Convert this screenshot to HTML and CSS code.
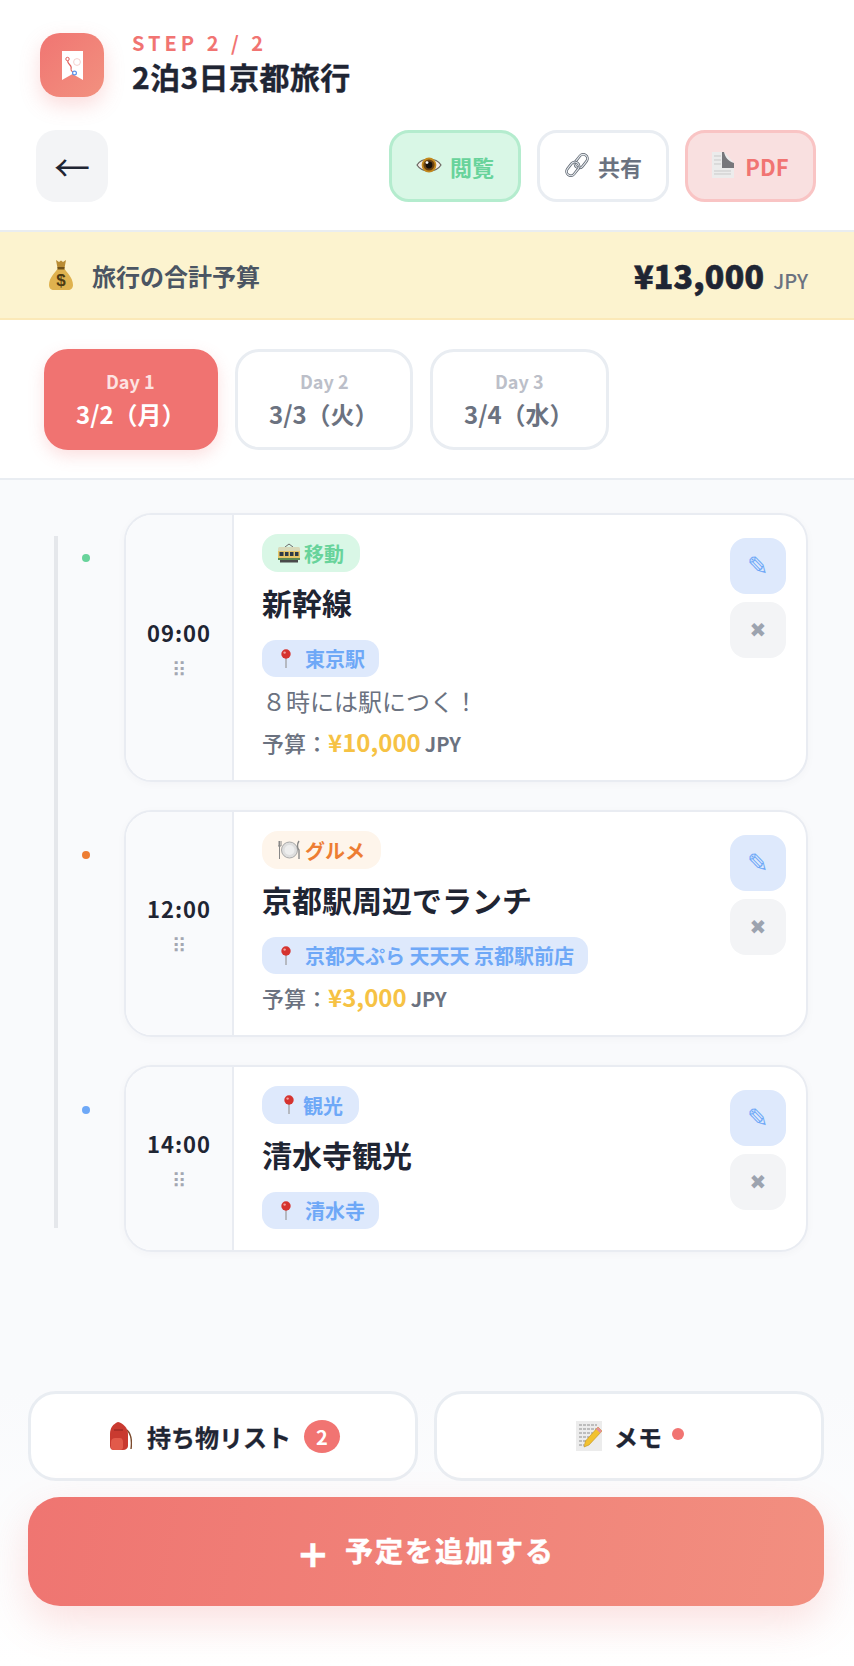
FILE: index.html
```html
<!DOCTYPE html>
<html lang="ja">
  <head>
    <meta charset="utf-8" />
    <title>2泊3日京都旅行</title>
    <link rel="stylesheet" href="styles.css">
  </head>
  <body>
    <!-- icon sprite, the emoji are drawn here because no emoji font is installed -->
    <svg class="sprite" aria-hidden="true">
      <symbol id="i-eye" viewBox="0 0 26 20">
        <path d="M1 10C6 2 20 2 25 10C20 18 6 18 1 10Z" fill="#f3efe9" stroke="#6b6560" stroke-width="1.2"/>
        <circle cx="13" cy="10" r="7.4" fill="#c58a1e"/>
        <circle cx="13" cy="10" r="5.6" fill="#6d4313"/>
        <circle cx="13" cy="10" r="3.4" fill="#17110c"/>
        <circle cx="11" cy="7.6" r="1.4" fill="#fff"/>
      </symbol>
      <symbol id="i-link" viewBox="0 0 26 26">
        <rect x="13" y="1.5" width="8.5" height="15" rx="4.2" transform="rotate(38 17 9)" fill="none" stroke="#59616b" stroke-width="2.6"/>
        <rect x="13" y="1.5" width="8.5" height="15" rx="4.2" transform="rotate(38 17 9)" fill="none" stroke="#e3e7ec" stroke-width="1.2"/>
        <rect x="4.5" y="9.5" width="8.5" height="15" rx="4.2" transform="rotate(38 9 17)" fill="none" stroke="#59616b" stroke-width="2.6"/>
        <rect x="4.5" y="9.5" width="8.5" height="15" rx="4.2" transform="rotate(38 9 17)" fill="none" stroke="#e3e7ec" stroke-width="1.2"/>
      </symbol>
      <symbol id="i-doc" viewBox="0 0 22 26">
        <path d="M0 0H12L22 11V26H0Z" fill="#ececec"/>
        <path d="M12 0C13 5 16 9 22 11V16H10V0Z" fill="#77777b"/>
        <path d="M2 4H9M2 8H9M2 12H9M2 19H19M2 22H19" stroke="#c9c9c9" stroke-width="1"/>
      </symbol>
      <symbol id="i-money" viewBox="0 0 24 30">
        <path d="M7 0L10 2L12 .5L14 2L17 0L15.500 8H8.500Z" fill="#b98c35"/>
        <path d="M9 8H15C17 12 24 17 24 25C24 28 22 30 19 30H5C2 30 0 28 0 25C0 17 7 12 9 8Z" fill="#dfb24f"/>
        <rect x="8.500" y="7" width="7" height="2.500" fill="#6f5019"/>
        <text x="12" y="26" class="dollar">$</text>
      </symbol>
      <symbol id="i-tram" viewBox="0 0 22 20">
        <path d="M7 4L11 1M15 4L11 1" stroke="#6b6b6b" stroke-width="1"/>
        <rect x="0" y="4" width="22" height="5" rx="1.5" fill="#d8d9b9"/>
        <rect x="0" y="8" width="22" height="9" fill="#e7c667"/>
        <rect x="1.5" y="9" width="4" height="4" fill="#2e3b48"/>
        <rect x="7" y="9" width="3.5" height="4" fill="#2e3b48"/>
        <rect x="12" y="9" width="3.5" height="4" fill="#2e3b48"/>
        <rect x="17" y="9" width="3.5" height="4" fill="#2e3b48"/>
        <rect x="0" y="15" width="22" height="2" fill="#5e8a54"/>
        <rect x="2" y="17" width="18" height="2.5" fill="#4a4a4a"/>
      </symbol>
      <symbol id="i-pin" viewBox="0 0 12 20">
        <rect x="5.4" y="9" width="1.2" height="10" fill="#9a9a9a"/>
        <circle cx="6" cy="5" r="4.7" fill="#d5332f"/>
        <circle cx="4.6" cy="3.6" r="1.2" fill="#f2a09c"/>
      </symbol>
      <symbol id="i-plate" viewBox="0 0 23 20">
        <circle cx="11.5" cy="10" r="8" fill="#dedede" stroke="#a9a9a9" stroke-width="1"/>
        <circle cx="11.5" cy="10" r="5" fill="#eeeeee"/>
        <path d="M1.5 1V19M0 1V6H3V1" fill="none" stroke="#888" stroke-width="1"/>
        <path d="M21 1C19 4 19 8 21 10V19" fill="none" stroke="#888" stroke-width="1.4"/>
      </symbol>
      <symbol id="i-bag" viewBox="0 0 24 28">
        <path d="M19 8C23 12 24 20 23 27" fill="none" stroke="#7b4a2c" stroke-width="1.4"/>
        <path d="M10 0C5 2 2 6 2 12V24C2 27 4 28 6 28H15C18 28 20 26 20 24V12C20 6 15 1 10 0Z" fill="#c93a30"/>
        <path d="M3 20C3 17 5 16 7 16H12C14 16 15 18 15 20V25C15 27 14 28 12 28H6C4 28 3 27 3 25Z" fill="#e25a4a"/>
        <path d="M6 8H15" stroke="#8e231e" stroke-width="1"/>
      </symbol>
      <symbol id="i-memo" viewBox="0 0 26 30">
        <rect x="0" y="0" width="26" height="30" fill="#ececec"/>
        <path d="M3 4H21M3 8H21M3 12H17M3 16H13M3 20H10M3 24H8" stroke="#8e8e8e" stroke-width="1" stroke-dasharray="3 1"/>
        <path d="M22 6L26 10L13 24L8 26L9.500 20Z" fill="#f2c230" stroke="#c08f1e" stroke-width=".6"/>
        <path d="M22 6L26 10L24 12L20 8Z" fill="#e58f9c"/>
      </symbol>
      <symbol id="i-route" viewBox="0 0 21 29">
        <path d="M0 0H21V29L10.500 23L0 29Z" fill="#fff"/>
        <path d="M6 9C4 13 11 14 9 18C8.500 20 11 21 12 22" fill="none" stroke="#e0605c" stroke-width="1.100"/>
        <circle cx="5.500" cy="8" r="1.700" fill="#fff" stroke="#e0605c"/>
        <circle cx="12.500" cy="22" r="1.900" fill="#fff" stroke="#5b93ec" stroke-width="1.200"/>
        <circle cx="15" cy="11" r="3.400" fill="none" stroke="#f2c4c0" stroke-width=".8"/>
      </symbol>
    </svg>

    <header class="header">
      <div class="brand">
        <div class="logo"><svg class="logo-icon"><use href="#i-route"/></svg></div>
        <div class="brand-text">
          <div class="step">STEP 2 / 2</div>
          <h1 class="trip-title">2泊3日京都旅行</h1>
        </div>
      </div>
      <div class="toolbar">
        <button type="button" class="backButton">←</button>
        <div class="toolbar-right">
          <button type="button" class="toolButton viewButton"><svg class="ic-eye"><use href="#i-eye"/></svg>閲覧</button>
          <button type="button" class="toolButton shareButton"><svg class="ic-link"><use href="#i-link"/></svg>共有</button>
          <button type="button" class="toolButton pdfButton"><svg class="ic-doc"><use href="#i-doc"/></svg>PDF</button>
        </div>
      </div>
    </header>

    <section class="budget">
      <div class="budget-label"><svg class="ic-money"><use href="#i-money"/></svg>旅行の合計予算</div>
      <div class="budget-total"><span class="budget-amount">¥13,000</span><span class="budget-unit">JPY</span></div>
    </section>

    <nav class="days">
      <button type="button" class="dayTab active"><span class="day-no">Day 1</span><span class="day-date">3/2（月）</span></button>
      <button type="button" class="dayTab"><span class="day-no">Day 2</span><span class="day-date">3/3（火）</span></button>
      <button type="button" class="dayTab wide"><span class="day-no">Day 3</span><span class="day-date">3/4（水）</span></button>
    </nav>

    <main class="main">
      <div class="timeline">
        <div class="row">
          <span class="dot green"></span>
          <article class="card">
            <div class="time-col"><span class="time">09:00</span><span class="grip">⠿</span></div>
            <div class="card-body">
              <span class="tag tag-move"><svg class="ic-tram"><use href="#i-tram"/></svg>移動</span>
              <h2 class="card-title">新幹線</h2>
              <span class="place"><svg class="ic-pin"><use href="#i-pin"/></svg>東京駅</span>
              <p class="note">８時には駅につく！</p>
              <p class="cost">予算：<span class="cost-num">¥10,000</span><span class="cost-unit">JPY</span></p>
            </div>
            <div class="actions">
              <button type="button" class="editButton">✎</button>
              <button type="button" class="deleteButton">✖</button>
            </div>
          </article>
        </div>

        <div class="row">
          <span class="dot orange"></span>
          <article class="card">
            <div class="time-col"><span class="time">12:00</span><span class="grip">⠿</span></div>
            <div class="card-body">
              <span class="tag tag-food"><svg class="ic-plate"><use href="#i-plate"/></svg>グルメ</span>
              <h2 class="card-title">京都駅周辺でランチ</h2>
              <span class="place"><svg class="ic-pin"><use href="#i-pin"/></svg>京都天ぷら 天天天 京都駅前店</span>
              <p class="cost">予算：<span class="cost-num">¥3,000</span><span class="cost-unit">JPY</span></p>
            </div>
            <div class="actions">
              <button type="button" class="editButton">✎</button>
              <button type="button" class="deleteButton">✖</button>
            </div>
          </article>
        </div>

        <div class="row">
          <span class="dot blue"></span>
          <article class="card">
            <div class="time-col"><span class="time">14:00</span><span class="grip">⠿</span></div>
            <div class="card-body">
              <span class="tag tag-sight"><svg class="ic-pin"><use href="#i-pin"/></svg>観光</span>
              <h2 class="card-title">清水寺観光</h2>
              <span class="place"><svg class="ic-pin"><use href="#i-pin"/></svg>清水寺</span>
            </div>
            <div class="actions">
              <button type="button" class="editButton">✎</button>
              <button type="button" class="deleteButton">✖</button>
            </div>
          </article>
        </div>
      </div>
    </main>

    <footer class="footer">
      <div class="footer-tools">
        <button type="button" class="footButton"><svg class="ic-bag"><use href="#i-bag"/></svg>持ち物リスト<span class="count">2</span></button>
        <button type="button" class="footButton"><svg class="ic-memo"><use href="#i-memo"/></svg>メモ<span class="memo-dot"></span></button>
      </div>
      <button type="button" class="addButton"><span class="plus">+</span>予定を追加する</button>
    </footer>
  </body>
</html>
```

FILE: styles.css
```css
* {
  box-sizing: border-box;
}

body {
  margin: 0;
  width: 854px;
  height: 1666px;
  display: flex;
  flex-direction: column;
  background-color: #f9fafc;
  color: #1f2533;
  font-family: "Noto Sans CJK JP", "Noto Sans", sans-serif;
}

button {
  font-family: inherit;
  cursor: pointer;
}

svg {
  flex: none;
  display: block;
}

.sprite {
  display: none;
}

.dollar {
  font-family: "Liberation Sans", sans-serif;
  font-size: 17px;
  font-weight: bold;
  fill: #4d3a12;
  text-anchor: middle;
}

/* header */
.header {
  height: 232px;
  padding: 33px 38px 0 36px;
  background-color: white;
  border-bottom: 2px solid #e9edf0;
}

.brand {
  display: flex;
  align-items: center;
  gap: 28px;
  height: 64px;
  padding-left: 4px;
}

.logo {
  width: 64px;
  height: 64px;
  display: flex;
  align-items: center;
  justify-content: center;
  border-radius: 20px;
  background: linear-gradient(135deg, #f07572, #f2917f);
  box-shadow: 0 8px 20px rgba(240, 117, 114, 0.25);
}

.logo-icon {
  width: 21px;
  height: 29px;
}

.brand-text {
  margin-top: -3px;
}

.step {
  color: #f17472;
  font-size: 20px;
  font-weight: bold;
  letter-spacing: 4px;
  line-height: 24px;
}

.trip-title {
  margin: 1px 0 0;
  font-size: 30px;
  font-weight: bold;
  letter-spacing: 0.4px;
  line-height: 40px;
  -webkit-text-stroke: 0.4px #1f2533;
}

.toolbar {
  display: flex;
  justify-content: space-between;
  margin-top: 33px;
}

.toolbar-right {
  display: flex;
  gap: 16px;
}

.backButton {
  width: 72px;
  height: 72px;
  padding: 0;
  border: none;
  border-radius: 20px;
  background-color: #f3f4f6;
  color: #1f2533;
  font-size: 36px;
  line-height: 72px;
}

.toolButton {
  width: 132px;
  height: 72px;
  display: flex;
  align-items: center;
  justify-content: center;
  gap: 8px;
  padding: 0;
  border: 3px solid;
  border-radius: 20px;
  font-size: 22px;
  font-weight: bold;
}

.viewButton {
  background-color: #d9f7e6;
  border-color: #b4ecce;
  color: #68d39b;
}

.shareButton {
  background-color: white;
  border-color: #e9edf2;
  color: #6b7280;
}

.pdfButton {
  width: 131px;
  background-color: #f9e0e0;
  border-color: #f9c4c4;
  color: #f17472;
}

.ic-eye {
  width: 26px;
  height: 20px;
  margin-top: -3px;
}

.ic-link {
  width: 26px;
  height: 26px;
  margin-top: -2px;
}

.ic-doc {
  width: 22px;
  height: 26px;
  margin-top: -2px;
  margin-right: 3px;
}

/* budget bar */
.budget {
  height: 88px;
  display: flex;
  align-items: center;
  justify-content: space-between;
  padding: 0 46px 0 49px;
  background-color: #fcf3cf;
  border-bottom: 2px solid #fbe9b8;
}

.budget-label {
  display: flex;
  align-items: center;
  gap: 19px;
  color: #4b5563;
  font-size: 24px;
  font-weight: bold;
}

.ic-money {
  width: 24px;
  height: 30px;
}

.budget-total {
  display: flex;
  align-items: baseline;
  gap: 9px;
}

.budget-amount {
  font-size: 32px;
  font-weight: 900;
  letter-spacing: 0.3px;
  line-height: 44px;
  -webkit-text-stroke: 0.7px #1f2533;
}

.budget-unit {
  color: #6b7280;
  font-size: 20px;
  font-weight: 500;
}

/* day tabs */
.days {
  height: 160px;
  display: flex;
  gap: 17px;
  padding: 29px 0 0 44px;
  background-color: white;
  border-bottom: 2px solid #e9edf2;
  align-items: flex-start;
}

.dayTab {
  width: 178px;
  height: 101px;
  display: flex;
  flex-direction: column;
  padding: 17px 0 0 31px;
  border: 3px solid #e9edf2;
  border-radius: 24px;
  background-color: white;
  color: #6b7280;
  text-align: left;
}

.dayTab.wide {
  width: 179px;
}

.dayTab.active {
  width: 174px;
  padding-left: 29px;
  background-color: #f07371;
  border-color: #f07371;
  color: white;
  box-shadow: 0 6px 16px rgba(241, 116, 114, 0.22);
}

.day-no {
  margin-left: 31px;
  color: #bcbfc9;
  font-size: 18px;
  font-weight: bold;
  line-height: 24px;
}

.dayTab.active .day-no {
  margin-left: 30px;
  color: #fde3e2;
}

.day-date {
  margin-top: 4px;
  font-size: 24px;
  font-weight: bold;
  line-height: 34px;
  white-space: nowrap;
}

/* timeline */
.main {
  flex: 1;
  padding-top: 33px;
}

.timeline {
  position: relative;
  display: flex;
  flex-direction: column;
  gap: 28px;
  padding: 0 46px 0 82px;
}

.timeline::before {
  content: "";
  position: absolute;
  left: 54px;
  top: 23px;
  bottom: 24px;
  width: 4px;
  background-color: #e5e7eb;
}

.row {
  display: flex;
  gap: 34px;
  align-items: flex-start;
}

.dot {
  flex: none;
  width: 8px;
  height: 8px;
  margin-top: 41px;
  border-radius: 50%;
}

.green {
  background-color: #68d39b;
}

.orange {
  background-color: #ed7d33;
}

.blue {
  background-color: #6ea8f7;
}

.card {
  flex: 1;
  display: flex;
  overflow: hidden;
  border: 2px solid #e9ecf2;
  border-radius: 28px;
  background-color: white;
  box-shadow: 0 2px 8px rgba(31, 37, 51, 0.03);
}

.time-col {
  flex: none;
  width: 108px;
  display: flex;
  flex-direction: column;
  align-items: center;
  justify-content: center;
  background-color: #f9fafc;
  border-right: 2px solid #e9ecf2;
}

.time {
  font-size: 22px;
  font-weight: bold;
  letter-spacing: 1px;
  line-height: 36px;
}

.grip {
  margin-top: 8px;
  color: #a3a7b2;
  font-family: "DejaVu Sans", sans-serif;
  font-size: 20px;
  line-height: 24px;
}

.card-body {
  flex: 1;
  min-width: 0;
  display: flex;
  flex-direction: column;
  align-items: flex-start;
  padding: 19px 0 12px 28px;
}

.tag {
  height: 38px;
  display: flex;
  align-items: center;
  gap: 4px;
  padding: 0 16px;
  border-radius: 16px;
  font-size: 20px;
  font-weight: bold;
}

.tag-move {
  background-color: #d9f7e6;
  color: #68d39b;
}

.tag-food {
  background-color: #fef5eb;
  color: #ed7d33;
}

.tag-sight {
  background-color: #dee9fc;
  color: #6ea8f7;
  padding-left: 17px;
}

.ic-tram {
  width: 22px;
  height: 20px;
}

.ic-plate {
  width: 23px;
  height: 20px;
}

.ic-pin {
  width: 12px;
  height: 20px;
}

.tag-sight .ic-pin {
  margin: 0 4px;
}

.card-title {
  margin: 5px 0 13px;
  font-size: 30px;
  font-weight: bold;
  line-height: 50px;
}

.place {
  height: 37px;
  display: flex;
  align-items: center;
  gap: 13px;
  margin-bottom: 3px;
  padding: 0 14px 0 18px;
  border-radius: 14px;
  background-color: #dee9fc;
  color: #6ea8f7;
  font-size: 20px;
  font-weight: bold;
  white-space: nowrap;
}

.place:last-child {
  margin-bottom: 9px;
}

.note {
  margin: 1px 0 2px;
  color: #6b7280;
  font-size: 24px;
  line-height: 39px;
}

.cost {
  height: 46px;
  margin: 0;
  display: flex;
  align-items: baseline;
  color: #6b7280;
  font-size: 22px;
  font-weight: 500;
  line-height: 40px;
}

.cost-num {
  color: #f6c244;
  font-size: 24px;
  font-weight: bold;
}

.cost-unit {
  margin-left: 4px;
  font-size: 20px;
  font-weight: bold;
}

.actions {
  flex: none;
  display: flex;
  flex-direction: column;
  gap: 8px;
  padding: 23px 20px 0 0;
}

.editButton,
.deleteButton {
  width: 56px;
  height: 56px;
  padding: 0;
  border: none;
  border-radius: 16px;
  font-family: "DejaVu Sans", sans-serif;
}

.editButton {
  background-color: #dee9fc;
  color: #6ea8f7;
  font-size: 26px;
}

.deleteButton {
  background-color: #f3f4f6;
  color: #9ca3af;
  font-size: 20px;
}

/* footer */
.footer {
  padding: 0 30px 60px 28px;
  display: flex;
  flex-direction: column;
  gap: 16px;
  background: linear-gradient(#f9fafc, white);
}

.footer-tools {
  display: flex;
  gap: 16px;
}

.footButton {
  flex: 1;
  height: 90px;
  display: flex;
  align-items: center;
  justify-content: center;
  gap: 15px;
  padding: 0 0 0 2px;
  border: 3px solid #e9edf2;
  border-radius: 28px;
  background-color: white;
  color: #1f2533;
  font-size: 24px;
  font-weight: bold;
  -webkit-text-stroke: 0.3px #1f2533;
}

.ic-bag {
  width: 24px;
  height: 28px;
}

.ic-memo {
  width: 26px;
  height: 30px;
  margin-right: -3px;
}

.count {
  width: 36px;
  height: 33px;
  display: flex;
  align-items: center;
  justify-content: center;
  margin-left: -2px;
  border-radius: 50%;
  background-color: #f17472;
  color: white;
  font-size: 20px;
  -webkit-text-stroke: 0;
}

.memo-dot {
  width: 12px;
  height: 12px;
  margin-left: -5px;
  margin-bottom: 4px;
  border-radius: 50%;
  background-color: #f17472;
}

.addButton {
  height: 109px;
  display: flex;
  align-items: center;
  justify-content: center;
  gap: 16px;
  padding: 0 0 4px;
  border: none;
  border-radius: 32px;
  background: linear-gradient(100deg, #ef7571, #f28f80);
  box-shadow: 0 16px 40px rgba(240, 117, 114, 0.22);
  color: white;
  font-size: 28px;
  font-weight: bold;
  letter-spacing: 2px;
  -webkit-text-stroke: 0.5px white;
}

.plus {
  margin-top: 8px;
  font-family: "DejaVu Sans", sans-serif;
  font-size: 38px;
  line-height: 40px;
  letter-spacing: 0;
}
```
